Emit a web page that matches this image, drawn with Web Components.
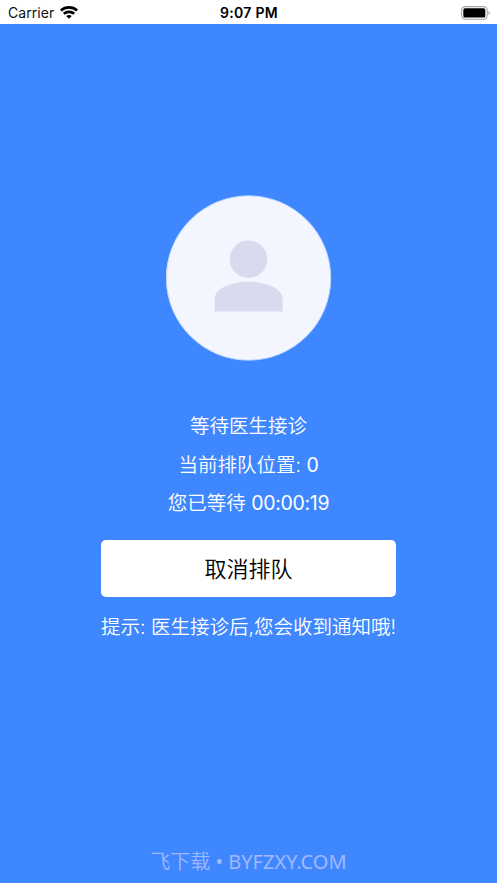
<!DOCTYPE html>
<html lang="zh-CN">
<head>
<meta charset="utf-8">
<title>等待医生接诊</title>
<style>
html, body { margin: 0; height: 100%; }
body { overflow: hidden; background: #3f87ff; font-family: Inter, "Noto Sans CJK SC", sans-serif; }
</style>
</head>
<body>
<waiting-screen></waiting-screen>
<script>
function define(name, html) {
  const template = document.createElement('template');
  template.innerHTML = html;
  customElements.define(name, class extends HTMLElement {
    constructor() {
      super();
      this.attachShadow({ mode: 'open' }).append(template.content.cloneNode(true));
    }
  });
}

define('wifi-icon', `
<style>:host { display: block; width: 18px; height: 13px; } svg { display: block; }</style>
<svg width="18" height="13" viewBox="0 0 18 13" fill="none" stroke="#000" stroke-width="2.7">
  <path d="M.9 4.5C5.4 .3 12.6 .3 17.1 4.5"/>
  <path d="M3.8 7.8C6.7 5.1 11.3 5.1 14.2 7.8"/>
  <path d="M6.2 10Q9 7.9 11.8 10L9 12.8Z" fill="#000" stroke="none"/>
</svg>`);

define('battery-icon', `
<style>:host { display: block; width: 29px; height: 14px; } svg { display: block; }</style>
<svg width="29" height="14" viewBox="0 0 29 14">
  <rect x=".6" y=".6" width="25.6" height="12.6" rx="3.6" fill="#fff" stroke="#a5a5a5" stroke-width="1.1"/>
  <rect x="2.3" y="2.3" width="22" height="9.2" rx="1.6" fill="#000"/>
  <path d="M27.5 5Q29 5.5 29 7T27.5 9Z" fill="#a5a5a5"/>
</svg>`);

define('status-bar', `
<style>
:host { display: grid; grid-template-columns: 1fr auto 1fr; align-items: center; height: 24px; box-sizing: border-box; padding: 1px 7px 0 8px; background: #fff; color: #111; font-size: 14px; }
.carrier { display: flex; align-items: center; gap: 6px; letter-spacing: .06px; }
.time { font-weight: 600; letter-spacing: .28px; color: #000; }
battery-icon { justify-self: end; }
</style>
<div class="carrier"><slot name="carrier"></slot><wifi-icon></wifi-icon></div>
<div class="time"><slot name="time"></slot></div>
<battery-icon></battery-icon>`);

define('user-avatar', `
<style>:host { display: block; width: 166px; height: 166px; } svg { display: block; }</style>
<svg width="166" height="166" viewBox="0.5 0 166 166">
  <circle cx="83" cy="83" r="82.2" fill="#f3f6ff" stroke="#c3d9ff" stroke-width=".9"/>
  <g fill="#d8dbed">
    <circle cx="83" cy="64.2" r="18.8"/>
    <path d="M49 116.5V104C49 94 65 86.8 83 86.8S117 94 117 104V116.5Z"/>
  </g>
</svg>`);

define('queue-line', `
<style>:host { display: block; height: 38.4px; line-height: 38.4px; font-size: 19.5px; font-weight: 350; color: #fff; white-space: nowrap; }</style>
<slot></slot>`);

define('cancel-button', `
<style>
:host { display: block; width: 295px; height: 57px; }
button { width: 100%; height: 100%; border: 0; padding: 1px 0 0; border-radius: 5px; background: #fff; color: #000; font: 350 22px/56px Inter, "Noto Sans CJK SC", sans-serif; }
</style>
<button type="button"><slot></slot></button>`);

define('site-mark', `
<style>:host { display: block; color: #a1b8ff; font: 350 20px/28px "Noto Sans", "Noto Sans CJK SC", sans-serif; white-space: nowrap; }</style>
<slot></slot>`);

define('waiting-screen', `
<style>
:host { display: flex; flex-direction: column; height: 883px; background: #3f87ff; }
main { flex: 1; display: flex; flex-direction: column; align-items: center; padding-top: 171px; }
.info { display: flex; flex-direction: column; align-items: center; margin: 46.2px 0 18px; }
.num { font-weight: 400; letter-spacing: -.3px; }
.tip { margin-top: 10.3px; }
.latin { font-weight: 400; }
footer { display: flex; justify-content: center; padding-bottom: 7px; }
</style>
<status-bar><span slot="carrier">Carrier</span><span slot="time">9:07 PM</span></status-bar>
<main>
  <user-avatar></user-avatar>
  <div class="info">
    <queue-line>等待医生接诊</queue-line>
    <queue-line>当前排队位置: <span class="num">0</span></queue-line>
    <queue-line>您已等待 <span class="num">00:00:19</span></queue-line>
  </div>
  <cancel-button>取消排队</cancel-button>
  <queue-line class="tip">提示: 医生接诊后,您会收到通知哦!</queue-line>
</main>
<footer><site-mark>飞下载 <span class="latin">• BYFZXY.COM</span></site-mark></footer>`);
</script>
</body>
</html>
